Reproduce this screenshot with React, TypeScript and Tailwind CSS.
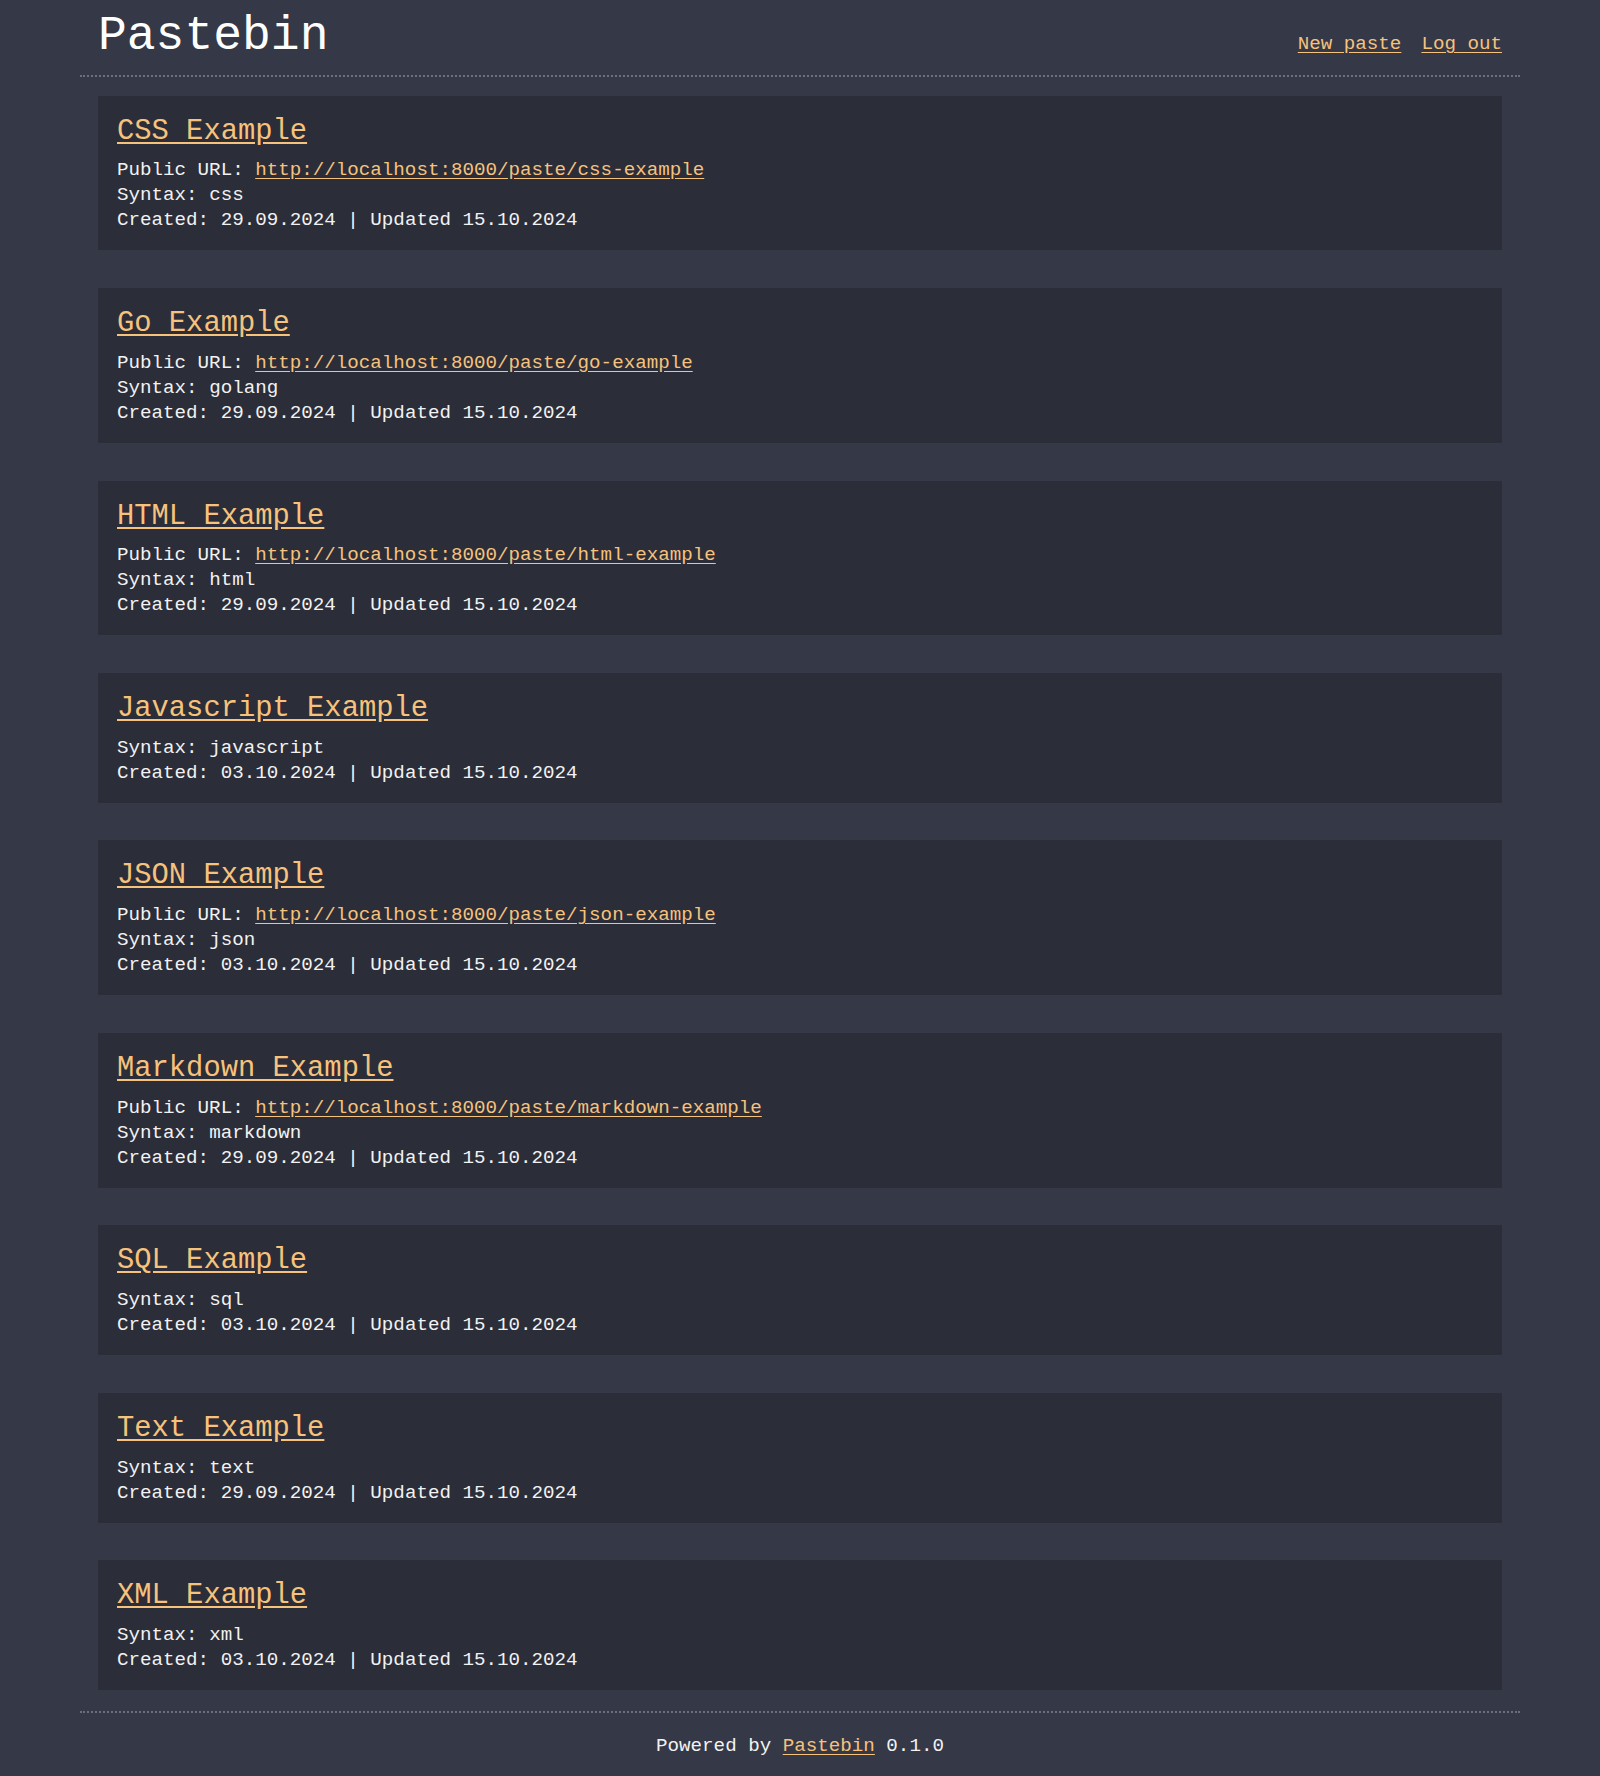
type Paste = {
  title: string;
  slug: string;
  syntax: string;
  created: string;
  isPublic: boolean;
};

const pastes: Paste[] = [
  { title: "CSS Example", slug: "css-example", syntax: "css", created: "29.09.2024", isPublic: true },
  { title: "Go Example", slug: "go-example", syntax: "golang", created: "29.09.2024", isPublic: true },
  { title: "HTML Example", slug: "html-example", syntax: "html", created: "29.09.2024", isPublic: true },
  { title: "Javascript Example", slug: "javascript-example", syntax: "javascript", created: "03.10.2024", isPublic: false },
  { title: "JSON Example", slug: "json-example", syntax: "json", created: "03.10.2024", isPublic: true },
  { title: "Markdown Example", slug: "markdown-example", syntax: "markdown", created: "29.09.2024", isPublic: true },
  { title: "SQL Example", slug: "sql-example", syntax: "sql", created: "03.10.2024", isPublic: false },
  { title: "Text Example", slug: "text-example", syntax: "text", created: "29.09.2024", isPublic: false },
  { title: "XML Example", slug: "xml-example", syntax: "xml", created: "03.10.2024", isPublic: false },
];

const link = "text-[#f6c27c] underline underline-offset-[3px]";

function PasteCard({ paste }: { paste: Paste }) {
  const url = `http://localhost:8000/paste/${paste.slug}`;
  return (
    <article className="bg-[#2b2d39] px-[19px] pt-[20px] pb-[17px]">
      <h2 className="mb-[11px] text-[28.8px] leading-[1.1]">
        <a href="#" className={link}>
          {paste.title}
        </a>
      </h2>
      <div className="text-[19.2px] leading-[25px] text-[#f2f2f2]">
        {paste.isPublic && (
          <p>
            Public URL:{" "}
            <a href="#" className={link}>
              {url}
            </a>
          </p>
        )}
        <p>Syntax: {paste.syntax}</p>
        <p>Created: {paste.created} | Updated 15.10.2024</p>
      </div>
    </article>
  );
}

export default function App() {
  return (
    <div
      className="min-h-screen bg-[#353847] text-[#f2f2f2]"
      style={{ fontFamily: '"Liberation Mono", "DejaVu Sans Mono", monospace' }}
    >
      <div className="mx-auto w-[1440px]">
        <header className="flex items-baseline justify-between border-b-2 border-dotted border-[#6b6e7f] px-[18px] pt-[8px] pb-[9px]">
          <h1 className="text-[48px] leading-[1.2] text-white">Pastebin</h1>
          <nav className="flex gap-[20px] text-[19.2px]">
            <a href="#" className={link}>
              New paste
            </a>
            <a href="#" className={link}>
              Log out
            </a>
          </nav>
        </header>

        <main className="flex flex-col gap-[37.8px] px-[18px] pt-[19px] pb-[21px]">
          {pastes.map((p) => (
            <PasteCard key={p.slug} paste={p} />
          ))}
        </main>

        <footer className="border-t-2 border-dotted border-[#6b6e7f] pt-[21px] pb-[18px] text-center text-[19.2px] leading-[25px]">
          Powered by{" "}
          <a href="#" className={link}>
            Pastebin
          </a>{" "}
          0.1.0
        </footer>
      </div>
    </div>
  );
}
